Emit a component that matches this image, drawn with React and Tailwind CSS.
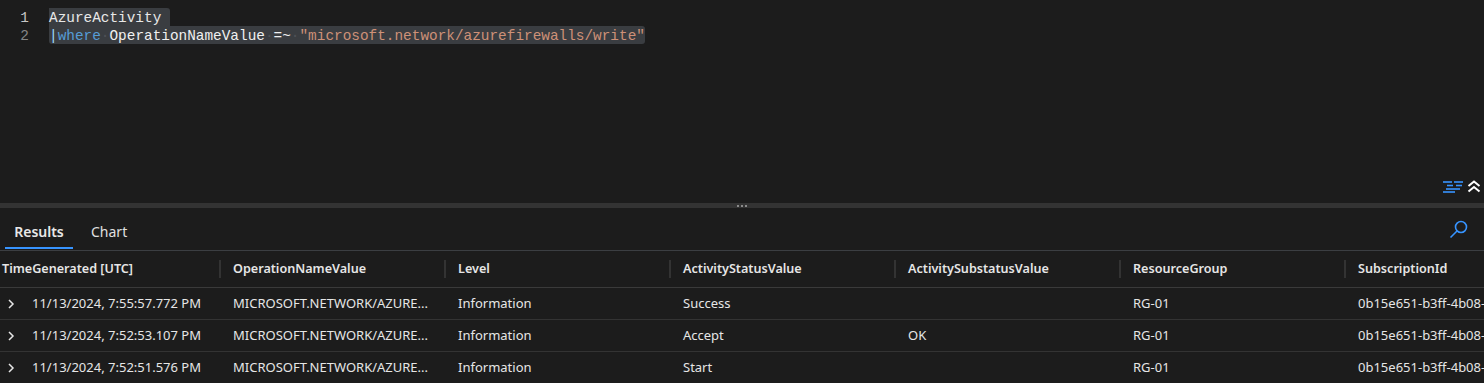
import React from "react";

const mono = { fontFamily: '"Liberation Mono", "DejaVu Sans Mono", monospace' };

function Chevron() {
  return (
    <svg width="8" height="10" viewBox="0 0 8 10" className="shrink-0">
      <path d="M2 1 L6 5 L2 9" stroke="#e6e6e6" strokeWidth="1.5" fill="none" />
    </svg>
  );
}

const cols = [
  "TimeGenerated [UTC]",
  "OperationNameValue",
  "Level",
  "ActivityStatusValue",
  "ActivitySubstatusValue",
  "ResourceGroup",
  "SubscriptionId",
];

const rows = [
  ["11/13/2024, 7:55:57.772 PM", "MICROSOFT.NETWORK/AZURE...", "Information", "Success", "", "RG-01", "0b15e651-b3ff-4b08-"],
  ["11/13/2024, 7:52:53.107 PM", "MICROSOFT.NETWORK/AZURE...", "Information", "Accept", "OK", "RG-01", "0b15e651-b3ff-4b08-"],
  ["11/13/2024, 7:52:51.576 PM", "MICROSOFT.NETWORK/AZURE...", "Information", "Start", "", "RG-01", "0b15e651-b3ff-4b08-"],
];

export default function App() {
  const dot = <span className="text-[#4e5156]">·</span>;
  return (
    <div
      className="w-[1484px] h-[383px] bg-[#1c1c1c] overflow-hidden flex flex-col text-[#e6e6e6]"
      style={{ fontFamily: '"Noto Sans", "Open Sans", sans-serif' }}
    >
      {/* Editor */}
      <div className="h-[203px] shrink-0 flex flex-col">
        <div className="flex-1 pt-[8px] text-[14.4px] leading-[18px]" style={mono}>
          <div className="flex h-[18px]">
            <div className="w-[29px] text-right text-[#c6c6c6] pt-[1px]">1</div>
            <div className="w-[20px]" />
            <div className="bg-[#3a3d41] text-[#e8e8e8] pr-[9px] rounded-tr-[3px] pt-[1px]">AzureActivity</div>
          </div>
          <div className="flex h-[18px]">
            <div className="w-[29px] text-right text-[#858585] pt-[1px]">2</div>
            <div className="w-[20px]" />
            <div className="bg-[#3a3d41] whitespace-pre rounded-b-[3px] rounded-tr-[3px] pt-[1px]">
              <span className="text-[#9cdcfe]">|</span>
              <span className="text-[#569cd6]">where</span>
              {dot}
              <span className="text-[#f0f0f0]">OperationNameValue</span>
              {dot}
              <span className="text-[#f0f0f0]">=~</span>
              {dot}
              <span className="text-[#ce9178]">"microsoft.network/azurefirewalls/write"</span>
            </div>
          </div>
        </div>
        <div className="flex justify-end items-center gap-[3px] pr-[3px] pb-[10px]">
          <svg width="22" height="12" viewBox="0 0 22 12">
            <g stroke="#3794ff" strokeWidth="1.6">
              <line x1="1" y1="1" x2="10" y2="1" />
              <line x1="12" y1="1" x2="21" y2="1" />
              <line x1="5" y1="4.5" x2="11" y2="4.5" />
              <line x1="14" y1="4.5" x2="20" y2="4.5" />
              <line x1="4" y1="8" x2="18" y2="8" />
              <line x1="1" y1="11" x2="13" y2="11" />
            </g>
          </svg>
          <svg width="14" height="13" viewBox="0 0 14 13">
            <g stroke="#ffffff" strokeWidth="2" fill="none">
              <path d="M1.5 6 L7 1.5 L12.5 6" />
              <path d="M1.5 11.5 L7 7 L12.5 11.5" />
            </g>
          </svg>
        </div>
      </div>

      {/* Splitter */}
      <div className="h-[5px] shrink-0 bg-[#333333] flex items-center justify-center gap-[2px]">
        <span className="w-[2px] h-[2px] bg-[#8a8a8a]" />
        <span className="w-[2px] h-[2px] bg-[#8a8a8a]" />
        <span className="w-[2px] h-[2px] bg-[#8a8a8a]" />
      </div>

      {/* Tabs */}
      <div className="h-[43px] shrink-0 flex items-end justify-between border-b border-[#3b3e42] pr-[16px]">
        <div className="flex items-end pl-[5px]">
          <div className="w-[68px] h-[33px] flex flex-col items-center justify-between">
            <span className="text-[14px] font-semibold text-[#e8e8e8] leading-[20px] mt-[5px]">Results</span>
            <span className="w-full h-[2px] bg-[#3794ff] mb-[1px]" />
          </div>
          <div className="h-[33px] ml-[18px]">
            <span className="text-[14px] text-[#e0e0e0] leading-[20px] block mt-[5px]">Chart</span>
          </div>
        </div>
        <div className="mb-[11px]">
          <svg width="19" height="19" viewBox="0 0 19 19">
            <g stroke="#3794ff" strokeWidth="1.6" fill="none">
              <circle cx="12" cy="7" r="5.5" />
              <line x1="8" y1="11" x2="1.5" y2="17.5" />
            </g>
          </svg>
        </div>
      </div>

      {/* Table header */}
      <div className="h-[37px] shrink-0 flex border-b border-[#3a3a3a] text-[12.6px] font-semibold">
        {cols.map((c, i) => (
          <div key={c} className={"flex items-center shrink-0 " + (i === 0 ? "w-[219px] pl-[2px]" : "w-[225px]")}>
            {i > 0 && <span className="w-[2px] h-[18px] bg-[#333333] mr-[12px]" />}
            <span>{c}</span>
          </div>
        ))}
      </div>

      {/* Rows */}
      {rows.map((r, ri) => (
        <div key={ri} className="h-[32px] flex border-b border-[#333333] text-[13px] shrink-0">
          {r.map((v, i) => (
            <div
              key={i}
              className={"flex items-center shrink-0 whitespace-nowrap overflow-hidden " + (i === 0 ? "w-[219px] pl-[7px]" : "w-[225px] pl-[14px]")}
            >
              {i === 0 && (
                <span className="mr-[17px] flex">
                  <Chevron />
                </span>
              )}
              {v}
            </div>
          ))}
        </div>
      ))}
    </div>
  );
}
